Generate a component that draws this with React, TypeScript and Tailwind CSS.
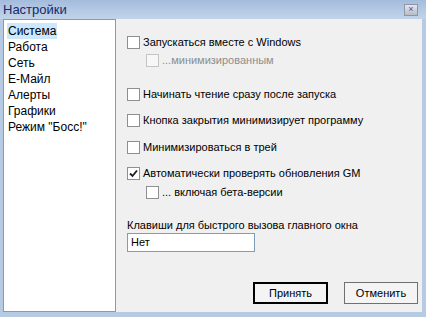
import React from 'react'

const font = { fontFamily: '"Liberation Sans", Arial, sans-serif' }

const sections = ['Система', 'Работа', 'Сеть', 'Е-Майл', 'Алерты', 'Графики', 'Режим "Босс!"']

function Box({ checked = false, disabled = false }: { checked?: boolean; disabled?: boolean }) {
  return (
    <span
      className={
        'flex h-[13px] w-[13px] shrink-0 items-center justify-center border ' +
        (disabled ? 'border-[#c4c4c4] bg-[#f7f7f7]' : 'border-[#8e8f8f] bg-white')
      }
    >
      {checked && (
        <svg width="9" height="9" viewBox="0 0 9 9">
          <path d="M1 4.5 L3.5 7 L8 1.5" fill="none" stroke="#1c1c1c" strokeWidth="1.8" />
        </svg>
      )}
    </span>
  )
}

function Row({ label, checked, disabled, indent, className = '' }: { label: string; checked?: boolean; disabled?: boolean; indent?: boolean; className?: string }) {
  return (
    <div className={'flex h-[18px] items-center gap-[3px] ' + (indent ? 'pl-[19px] ' : '') + className}>
      <Box checked={checked} disabled={disabled} />
      <span className={disabled ? 'text-[#8d8d8d]' : 'text-black'}>{label}</span>
    </div>
  )
}

export default function App() {
  return (
    <div className="w-[426px] h-[317px] bg-[#b6cae4] flex flex-col overflow-hidden" style={font}>
      {/* Title bar */}
      <div className="h-[19px] shrink-0 flex items-center justify-between pl-[3px] pr-[8px] bg-gradient-to-b from-[#a4bcdc] to-[#c2d4ea]">
        <span className="text-[13px] text-[#15296b] leading-none">Настройки</span>
        <span className="flex h-[12px] w-[14px] items-center justify-center border border-[#8c96a6] bg-gradient-to-b from-[#e4e6ea] to-[#b8bcc4] text-[9px] leading-none text-[#4b4fb0]">×</span>
      </div>

      {/* Body */}
      <div className="flex flex-1 border-l-[3px] border-r-[4px] border-b-[5px] border-[#b6cae4]">
        <div className="w-[113px] shrink-0 border border-[#7f9db9] bg-white pt-[3px] pl-[3px] text-[12px]">
          {sections.map((s, i) => (
            <div key={s} className="h-[16px] flex items-center">
              <span className={'px-[1px] leading-[16px] ' + (i === 0 ? 'bg-[#cce8ff]' : '')}>{s}</span>
            </div>
          ))}
        </div>

        <div className="flex-1 bg-[#f0f0f0] flex flex-col pl-[11px] pr-[4px] pt-[14px] text-[11px]">
          <Row label="Запускаться вместе с Windows" />
          <Row label="...минимизированным" disabled indent />
          <Row label="Начинать чтение сразу после запуска" className="mt-[16px]" />
          <Row label="Кнопка закрытия минимизирует программу" className="mt-[8px]" />
          <Row label="Минимизироваться в трей" className="mt-[9px]" />
          <Row label="Автоматически проверять обновления GM" checked className="mt-[8px]" />
          <Row label="... включая бета-версии" indent className="mt-[1px]" />

          <div className="mt-[17px] h-[14px] flex items-center">Клавиши для быстрого вызова главного окна</div>
          <div className="mt-[1px] w-[128px] h-[19px] border border-[#7f9db9] bg-white flex items-center px-[3px]">Нет</div>

          <div className="mt-auto mb-[8px] flex justify-end gap-[16px]">
            <button className="w-[75px] h-[22px] border-2 border-black bg-[#f4f4f4] text-[11px]">Принять</button>
            <button className="w-[74px] h-[22px] border border-[#707070] bg-[#f4f4f4] text-[11px]">Отменить</button>
          </div>
        </div>
      </div>
    </div>
  )
}
